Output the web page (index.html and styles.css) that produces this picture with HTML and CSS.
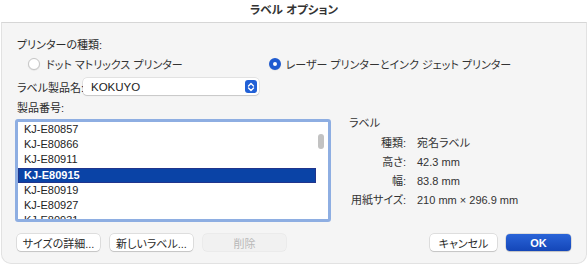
FILE: index.html
```html
<!DOCTYPE html>
<html lang="ja">
<head>
    <meta charset="UTF-8">
    <meta name="viewport" content="width=device-width, initial-scale=1.0">
    <title>ラベル オプション</title>
    <link rel="stylesheet" href="styles.css">
</head>
<body>
    <div class="titlebar">ラベル オプション</div>

    <div class="sheet">
        <div class="label-line">プリンターの種類:</div>

        <div class="radio-row">
            <label class="radio">
                <span class="dot"></span>
                ドット マトリックス プリンター
            </label>
            <label class="radio checked">
                <span class="dot"></span>
                レーザー プリンターとインク ジェット プリンター
            </label>
        </div>

        <div class="select-row">
            <span class="field-label">ラベル製品名:</span>
            <div class="select">
                <span class="select-value">KOKUYO</span>
                <span class="stepper">
                    <svg width="8" height="10" viewBox="0 0 8 10">
                        <path d="M1.5 4 L4 1.5 L6.5 4 M1.5 6 L4 8.5 L6.5 6" fill="none" stroke="#fff" stroke-width="1.4" stroke-linecap="round" stroke-linejoin="round"/>
                    </svg>
                </span>
            </div>
        </div>

        <div class="product">
            <div class="product-left">
                <div class="label-line">製品番号:</div>
                <div class="list">
                    <div class="list-inner">
                        <div class="row">KJ-E80857</div>
                        <div class="row">KJ-E80866</div>
                        <div class="row">KJ-E80911</div>
                        <div class="row selected">KJ-E80915</div>
                        <div class="row">KJ-E80919</div>
                        <div class="row">KJ-E80927</div>
                        <div class="row">KJ-E80931</div>
                    </div>
                    <div class="scroll-thumb"></div>
                </div>
            </div>

            <div class="info">
                <div class="info-title">ラベル</div>
                <div class="info-grid">
                    <span class="info-key">種類:</span><span>宛名ラベル</span>
                    <span class="info-key">高さ:</span><span>42.3 mm</span>
                    <span class="info-key">幅:</span><span>83.8 mm</span>
                    <span class="info-key">用紙サイズ:</span><span>210 mm × 296.9 mm</span>
                </div>
            </div>
        </div>

        <div class="buttons">
            <div class="btn-group">
                <button class="btn">サイズの詳細...</button>
                <button class="btn">新しいラベル...</button>
                <button class="btn" disabled>削除</button>
            </div>
            <div class="btn-group right">
                <button class="btn cancel">キャンセル</button>
                <button class="btn primary">OK</button>
            </div>
        </div>
    </div>
</body>
</html>
```

FILE: styles.css
```css
body {
    font-family: "Liberation Sans", "Noto Sans CJK JP", sans-serif;
    font-size: 11px;
    font-feature-settings: "palt";
    color: #2b2b2b;
    background: #fff;
    margin: 0;
}

.titlebar {
    height: 22px;
    line-height: 21px;
    text-align: center;
    font-weight: bold;
    font-size: 11.5px;
    color: #333;
}

.sheet {
    margin: 0 1px;
    height: 242px;
    box-sizing: border-box;
    background: #f5f5f5;
    border: 1px solid #e2e2e2;
    border-top-color: #d6d6d6;
    border-radius: 0 0 10px 10px;
    padding: 15px 15px 0 15px;
}

.label-line {
    height: 14px;
    line-height: 14px;
    white-space: nowrap;
}

/* radios */
.radio-row {
    display: flex;
    height: 16px;
    margin-top: 4px;
    padding-left: 11px;
}

.radio {
    display: flex;
    align-items: center;
    gap: 6px;
    color: #333;
    white-space: nowrap;
}

.radio.checked {
    margin-left: 86px;
    gap: 5px;
}

.dot {
    width: 10px;
    height: 10px;
    border-radius: 50%;
    background: #fff;
    border: 1px solid #c6c6c6;
    box-shadow: 0 0.5px 1px rgba(0, 0, 0, 0.12);
}

.radio.checked .dot {
    width: 4px;
    height: 4px;
    border: 4px solid #1f5bd0;
}

/* select */
.select-row {
    display: flex;
    align-items: center;
    height: 17px;
    margin-top: 6px;
}

.field-label {
    width: 66px;
    white-space: nowrap;
}

.select {
    display: flex;
    align-items: center;
    width: 176px;
    height: 17px;
    box-sizing: border-box;
    background: #fff;
    border-radius: 4px;
    box-shadow: 0 0 0 0.5px rgba(0, 0, 0, 0.15), 0 1px 1px rgba(0, 0, 0, 0.12);
    padding: 0 2px 0 8px;
}

.select-value {
    flex: 1;
    font-size: 11.5px;
    color: #222;
}

.stepper {
    width: 12px;
    height: 13px;
    border-radius: 3px;
    background: #2160d6;
    display: flex;
    align-items: center;
    justify-content: center;
}

/* product list + info */
.product {
    display: flex;
    margin-top: 6px;
}

.product-left {
    width: 316px;
    margin-left: -2px;
}

.product-left .label-line {
    padding-left: 2px;
}

.list {
    position: relative;
    margin-top: 4px;
    height: 103px;
    box-sizing: border-box;
    border: 3px solid #8eaee2;
    border-radius: 3px;
    background: #fff;
    overflow: hidden;
}

.row {
    height: 15.2px;
    line-height: 15.2px;
    padding-left: 6px;
    margin-right: 12px;
    color: #222;
}

.row.selected {
    background: #0a43a6;
    color: #fff;
    font-weight: bold;
    box-shadow: inset 0 0 0 1px #21358c;
}

.scroll-thumb {
    position: absolute;
    right: 4px;
    top: 12px;
    width: 6px;
    height: 15px;
    border-radius: 3px;
    background: #c2c2c2;
}

.info {
    margin-left: 18px;
    padding-top: 15px;
    color: #333;
}

.info-title {
    height: 14px;
    line-height: 14px;
}

.info-grid {
    display: grid;
    grid-template-columns: 57px auto;
    column-gap: 11px;
    row-gap: 5px;
    margin-top: 6px;
}

.info-grid span {
    height: 14px;
    line-height: 14px;
    white-space: nowrap;
}

.info-key {
    text-align: right;
}

/* buttons */
.buttons {
    display: flex;
    justify-content: space-between;
    margin-top: 12px;
}

.btn-group {
    display: flex;
    gap: 10px;
}

.btn-group.right {
    gap: 9px;
}

.btn {
    width: 83px;
    height: 17px;
    padding: 0;
    font: inherit;
    font-size: 11px;
    color: #2b2b2b;
    background: #fff;
    border: none;
    border-radius: 4px;
    box-shadow: 0 0 0 0.5px rgba(0, 0, 0, 0.18), 0 1px 1px rgba(0, 0, 0, 0.12);
}

.btn:disabled {
    background: #f1f1f1;
    color: #b8b8b8;
    box-shadow: 0 0 0 0.5px rgba(0, 0, 0, 0.08);
}

.btn.cancel {
    width: 67px;
}

.btn.primary {
    width: 65px;
    background: linear-gradient(#2a64d8, #1446b8);
    color: #fff;
    font-weight: bold;
    box-shadow: 0 0 0 0.5px rgba(0, 0, 0, 0.2), 0 1px 1px rgba(0, 0, 0, 0.12);
}
```
